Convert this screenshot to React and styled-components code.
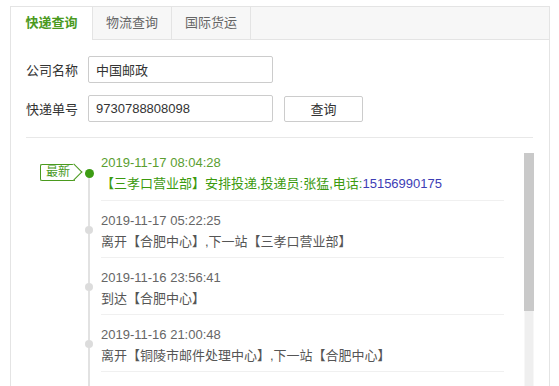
import React from 'react';
import styled, { createGlobalStyle } from 'styled-components';

const GlobalStyle = createGlobalStyle`
  html,
  body {
    margin: 0;
    height: 386px;
    overflow: hidden;
    background: #fff;
    font-family: 'Liberation Sans', 'Noto Sans CJK SC', sans-serif;
    font-size: 13px;
    color: #333;
  }
`;

const Page = styled.div`
  padding: 6px 9px 0 10px;
`;

const Panel = styled.div`
  border: 1px solid #e4e4e4;
  border-bottom: none;
  height: 380px;
  overflow: hidden;
`;

const TabBar = styled.div`
  display: flex;
  height: 32px;
  background: #f7f7f7;
  border-bottom: 1px solid #e4e4e4;
`;

const Tab = styled.div`
  width: ${p => (p.$active ? '81px' : '78px')};
  text-align: center;
  height: ${p => (p.$active ? '33px' : '32px')};
  line-height: 32px;
  margin-bottom: ${p => (p.$active ? '-1px' : '0')};
  border-right: 1px solid #e4e4e4;
  background: ${p => (p.$active ? '#fff' : 'transparent')};
  color: ${p => (p.$active ? '#4a9a1e' : '#666')};
  font-weight: ${p => (p.$active ? 'bold' : 'normal')};
  cursor: pointer;
`;

const Body = styled.div`
  padding: 16px 15px 0 15px;
`;

const Row = styled.div`
  display: flex;
  align-items: center;
  gap: 10px;
  margin-bottom: ${p => (p.$last ? '0' : '12px')};
`;

const Label = styled.label`
  width: 52px;
  color: #333;
  white-space: nowrap;
`;

const Input = styled.input`
  box-sizing: border-box;
  width: 185px;
  height: 27px;
  padding: 0 7px;
  border: 1px solid #ccc;
  border-radius: 2px;
  font-family: inherit;
  font-size: 13px;
  color: #333;
  outline: none;
`;

const Button = styled.button`
  box-sizing: border-box;
  width: 79px;
  height: 26px;
  margin-left: 1px;
  border: 1px solid #ccc;
  border-radius: 2px;
  background: #fff;
  font-family: inherit;
  font-size: 13px;
  color: #333;
  cursor: pointer;
`;

const Divider = styled.div`
  margin-top: 15px;
  border-top: 1px solid #e8e8e8;
  margin-right: 1px;
`;

const TraceBox = styled.div`
  display: flex;
  margin-top: 15px;
  height: 300px;
`;

const Scroller = styled.div`
  flex: 1;
  overflow-y: auto;
  scrollbar-width: none;

  &::-webkit-scrollbar {
    display: none;
  }
`;

const ScrollTrack = styled.div`
  box-sizing: border-box;
  width: 10px;
  background: #efefef;
  border-left: 1px solid #f7f7f7;
  border-right: 1px solid #f7f7f7;
`;

const ScrollThumb = styled.div`
  height: 158px;
  margin: 0 -1px;
  background: #c9c9c9;
`;

const List = styled.ul`
  position: relative;
  list-style: none;
  margin: 0;
  padding: 0 20px 10px 75px;

  &::before {
    content: '';
    position: absolute;
    left: 62px;
    top: 24px;
    bottom: 0;
    width: 2px;
    background: #e2e2e2;
  }
`;

const Item = styled.li`
  padding: 10px 0 4px;
  border-bottom: 1px solid #f0f0f0;

  &:first-child {
    padding: 0 0 5px;
  }
`;

const Time = styled.div`
  position: relative;
  line-height: 20px;
  color: ${p => (p.$latest ? '#5a9e30' : '#666')};
`;

const Dot = styled.span`
  position: absolute;
  left: ${p => (p.$latest ? '-16.5px' : '-16px')};
  top: ${p => (p.$latest ? '16px' : '15px')};
  width: ${p => (p.$latest ? '9px' : '8px')};
  height: ${p => (p.$latest ? '9px' : '8px')};
  border-radius: 50%;
  background: ${p => (p.$latest ? '#3d9c14' : '#dcdcdc')};
  z-index: 1;
`;

const Badge = styled.span`
  position: absolute;
  left: -61px;
  top: 11px;
  box-sizing: border-box;
  height: 17px;
  line-height: 15px;
  padding: 0 5px;
  border: 1px solid #4a9a1e;
  border-right: none;
  border-radius: 2px 0 0 2px;
  background: #fff;
  font-size: 12px;
  color: #4a9a1e;
  z-index: 1;

  &::after {
    content: '';
    position: absolute;
    right: -5px;
    top: 1px;
    width: 11px;
    height: 11px;
    border-top: 1px solid #4a9a1e;
    border-right: 1px solid #4a9a1e;
    background: #fff;
    transform: rotate(45deg);
    z-index: -1;
  }
`;

const Text = styled.div`
  line-height: 22px;
  color: ${p => (p.$latest ? '#3b9a0e' : '#555')};
  white-space: nowrap;
`;

const Phone = styled.span`
  color: #3d3db5;
`;

const tabs = ['快递查询', '物流查询', '国际货运'];

const traces = [
  { time: '2019-11-17 05:22:25', text: '离开【合肥中心】,下一站【三孝口营业部】' },
  { time: '2019-11-16 23:56:41', text: '到达【合肥中心】' },
  { time: '2019-11-16 21:00:48', text: '离开【铜陵市邮件处理中心】,下一站【合肥中心】' },
  { time: '2019-11-16 19:13:27', text: '到达【铜陵市邮件处理中心】' },
  { time: '2019-11-16 17:42:05', text: '离开【铜陵市铜官区营业部】,下一站【铜陵市邮件处理中心】' },
  { time: '2019-11-16 16:20:13', text: '【铜陵市铜官区营业部】已收寄' },
  { time: '2019-11-16 15:58:39', text: '【铜陵市铜官区营业部】揽投员已揽收' },
  { time: '2019-11-16 15:31:02', text: '卖家已发货' },
  { time: '2019-11-16 14:47:50', text: '订单已提交' }
];

function App() {
  return (
    <Page>
      <GlobalStyle />
      <Panel>
        <TabBar>
          {tabs.map((t, i) => (
            <Tab key={t} $active={i === 0}>
              {t}
            </Tab>
          ))}
        </TabBar>
        <Body>
          <Row>
            <Label>公司名称</Label>
            <Input defaultValue="中国邮政" />
          </Row>
          <Row $last>
            <Label>快递单号</Label>
            <Input defaultValue="9730788808098" />
            <Button>查询</Button>
          </Row>
          <Divider />
          <TraceBox>
            <Scroller>
              <List>
                <Item>
                  <Time $latest>
                    <Badge>最新</Badge>
                    <Dot $latest />
                    2019-11-17 08:04:28
                  </Time>
                  <Text $latest>
                    【三孝口营业部】安排投递,投递员:张猛,电话:<Phone>15156990175</Phone>
                  </Text>
                </Item>
                {traces.map(item => (
                  <Item key={item.time}>
                    <Time>
                      <Dot />
                      {item.time}
                    </Time>
                    <Text>{item.text}</Text>
                  </Item>
                ))}
              </List>
            </Scroller>
            <ScrollTrack>
              <ScrollThumb />
            </ScrollTrack>
          </TraceBox>
        </Body>
      </Panel>
    </Page>
  );
}

export default App;
